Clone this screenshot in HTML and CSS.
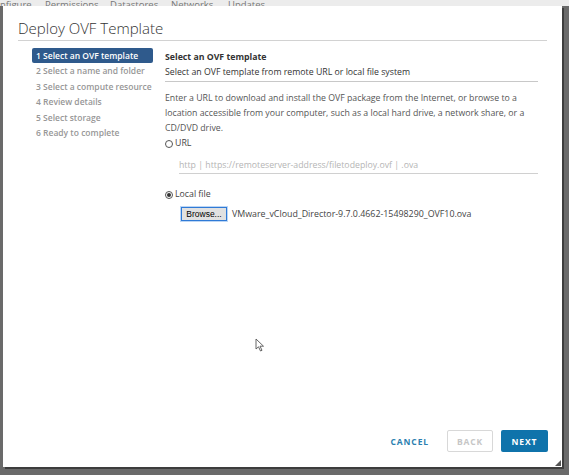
FILE: index.html
```html
<!DOCTYPE html>
<html lang="en">
<head>
    <meta charset="UTF-8">
    <title>Deploy OVF Template</title>
    <link rel="stylesheet" href="styles.css">
</head>
<body>
    <div class="tabs">
        <span class="tab-first">nfigure</span><span class="tab-perm">Permissions</span><span class="tab-ds">Datastores</span><span class="tab-net">Networks</span><span>Updates</span>
    </div>
    <div class="modal">
        <h1 class="modal-title">Deploy OVF Template</h1>
        <div class="modal-body">
            <ul class="steps">
                <li class="active">1 Select an OVF template</li>
                <li>2 Select a name and folder</li>
                <li>3 Select a compute resource</li>
                <li>4 Review details</li>
                <li>5 Select storage</li>
                <li>6 Ready to complete</li>
            </ul>
            <div class="page">
                <div class="page-head">
                    <div class="page-title">Select an OVF template</div>
                    <div class="page-sub">Select an OVF template from remote URL or local file system</div>
                </div>
                <p class="intro">Enter a URL to download and install the OVF package from the Internet, or browse to a location accessible from your computer, such as a local hard drive, a network share, or a CD/DVD drive.</p>
                <label class="radio"><span class="dot"></span>URL</label>
                <div class="url-field">http | https://remoteserver-address/filetodeploy.ovf | .ova</div>
                <label class="radio"><span class="dot checked"></span>Local file</label>
                <div class="file-row">
                    <button class="browse">Browse...</button>
                    <span class="file-name">VMware_vCloud_Director-9.7.0.4662-15498290_OVF10.ova</span>
                </div>
            </div>
        </div>
        <div class="modal-footer">
            <button class="btn btn-link">CANCEL</button>
            <button class="btn btn-outline" disabled>BACK</button>
            <button class="btn btn-primary">NEXT</button>
        </div>
        <svg class="grip" width="6" height="6" viewBox="0 0 6 6"><path d="M6 0 L6 6 L0 6 Z" fill="#555"/></svg>
        <svg class="pointer" width="10" height="15" viewBox="0 0 10 15">
            <path d="M1 1 L1 11 L3.5 8.8 L5.5 13 L7 12.3 L5 8.2 L8.5 8.2 Z" fill="#fff" stroke="#555" stroke-width="0.9"/>
        </svg>
    </div>
</body>
</html>
```

FILE: styles.css
```css
body {
    margin: 0;
    background: #6a6a6a;
    font-family: "Open Sans", "Liberation Sans", sans-serif;
    width: 569px;
    height: 475px;
    overflow: hidden;
}

/* strip of the page behind the dialog */
.tabs {
    display: flex;
    height: 6px;
    overflow: hidden;
    background: #ececec;
    font-size: 9.5px;
    line-height: 10px;
    color: #777;
    white-space: nowrap;
}
.tabs span {
    flex: none;
}
.tab-first {
    width: 45px;
}
.tab-perm {
    width: 65px;
}
.tab-ds {
    width: 61px;
}
.tab-net {
    width: 57px;
}

.modal {
    position: relative;
    margin-left: 3px;
    width: 559px;
    height: 461px;
    background: #fff;
    box-sizing: border-box;
    padding: 14px 15px 0 15px;
    display: flex;
    flex-direction: column;
    box-shadow: 2px 2px 0 #3d3d3d;
}

.modal-title {
    margin: 0;
    font-size: 15px;
    font-weight: 300;
    color: #333;
    line-height: 17px;
    padding-bottom: 3px;
    border-bottom: 1px solid #d2d2d2;
    width: 529px;
}

.modal-body {
    display: flex;
    flex: 1;
    padding-top: 7px;
}

.steps {
    list-style: none;
    margin: 0 0 0 14px;
    padding: 0;
    width: 121px;
    font-size: 8.5px;
    font-weight: 600;
    color: #979797;
}
.steps li {
    height: 15.4px;
    line-height: 15px;
    padding-left: 4px;
    white-space: nowrap;
}
.steps .active {
    background: #2f5a8c;
    color: #fff;
    border-radius: 2px;
}

.page {
    margin-left: 12px;
    width: 373px;
    font-size: 8.75px;
    color: #555;
}
.page-head {
    border-bottom: 1px solid #c8c8c8;
    padding-bottom: 2px;
}
.page-title {
    font-weight: 700;
    color: #333;
    line-height: 15px;
    padding-top: 2px;
}
.page-sub {
    color: #333;
    line-height: 14px;
}

.intro {
    margin: 9px 0 0 0;
    line-height: 15px;
}

.radio {
    display: flex;
    align-items: center;
    line-height: 15px;
    color: #444;
}
.dot {
    width: 8px;
    height: 8px;
    border: 1px solid #555;
    border-radius: 50%;
    margin-right: 2px;
    box-sizing: border-box;
    position: relative;
}
.dot.checked::after {
    content: "";
    position: absolute;
    left: 1px;
    top: 1px;
    width: 4px;
    height: 4px;
    border-radius: 50%;
    background: #333;
}

.url-field {
    margin: 8px 0 13px 14px;
    padding-bottom: 1px;
    border-bottom: 1px solid #d0d0d0;
    color: #b5b5b5;
    line-height: 13px;
}

.file-row {
    display: flex;
    align-items: center;
    margin: 5px 0 0 16px;
}
.browse {
    font-family: "Liberation Sans", sans-serif;
    font-size: 8.5px;
    height: 14px;
    width: 46px;
    padding: 0;
    background: #e1e1e1;
    border: 1px solid #2f7ad6;
    outline: 1px solid #bcd6f5;
    color: #000;
}
.file-name {
    margin-left: 5px;
    font-size: 8.85px;
    color: #444;
}

.modal-footer {
    display: flex;
    justify-content: flex-end;
    align-items: center;
    gap: 8px;
    width: 530px;
    padding-bottom: 15px;
}
.btn {
    font-family: "Open Sans", "Liberation Sans", sans-serif;
    font-size: 8.5px;
    font-weight: 700;
    letter-spacing: 0.9px;
    height: 22px;
    padding: 0 8px;
    border-radius: 2px;
    background: #fff;
    border: 1px solid transparent;
}
.btn-link {
    color: #2b7fb0;
    margin-right: 1px;
}
.btn-outline {
    border-color: #d8d8d8;
    color: #c6c6c6;
    width: 46px;
}
.btn-primary {
    background: #0f73ab;
    color: #fff;
    width: 47px;
}

.grip {
    position: absolute;
    right: 1px;
    bottom: 1px;
}
.pointer {
    position: absolute;
    left: 252px;
    top: 332px;
}
```
